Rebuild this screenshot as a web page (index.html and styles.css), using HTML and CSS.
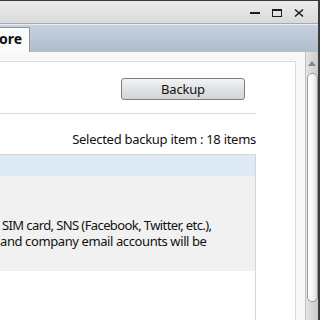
FILE: index.html
```html
<!DOCTYPE html>
<html>
<head>
<meta charset="utf-8">
<link rel="stylesheet" href="styles.css">
</head>
<body>
<div class="window">
  <div class="titlebar">
    <div class="controls">
      <svg class="ctl" width="12" height="10" viewBox="0 0 12 10"><rect x="1" y="4" width="10" height="2" fill="#1e1e1e"/></svg>
      <svg class="ctl" width="12" height="10" viewBox="0 0 12 10"><rect x="1.5" y="1.5" width="9" height="7" fill="none" stroke="#1e1e1e" stroke-width="1"/><rect x="1" y="1" width="10" height="2" fill="#1e1e1e"/></svg>
      <svg class="ctl" width="12" height="10" viewBox="0 0 12 10"><path d="M2 1.5 L10 8.5 M10 1.5 L2 8.5" stroke="#1e1e1e" stroke-width="1.6" fill="none"/></svg>
    </div>
  </div>
  <div class="sep"></div>
  <div class="tabbar">
    <div class="tab">ore</div>
  </div>
  <div class="main">
    <div class="content">
      <div class="panel">
        <div class="inner">
          <div class="btnrow"><button class="btn">Backup</button></div>
          <div class="count">Selected backup item : 18 items</div>
          <div class="list">
            <div class="list-head"></div>
            <div class="list-body">
              <p class="l1">SIM card, SNS (Facebook, Twitter, etc.),</p>
              <p>and company email accounts will be</p>
            </div>
          </div>
        </div>
      </div>
    </div>
    <div class="scrollbar">
      <div class="arrow"></div>
      <div class="thumb"></div>
    </div>
  </div>
</div>
</body>
</html>
```

FILE: styles.css
```css
html, body {
  margin: 0;
  padding: 0;
  width: 320px;
  height: 320px;
  overflow: hidden;
  background: #fff;
  font-family: "Noto Sans", "Open Sans", sans-serif;
  color: #111;
}
.window {
  width: 320px;
  height: 320px;
  box-sizing: border-box;
  border-top: 1px solid #3b3b3b;
  border-right: 2px solid #3b3b3b;
  display: flex;
  flex-direction: column;
}
.titlebar {
  height: 22px;
  flex: none;
  background: linear-gradient(#ececec, #d9d9d9);
  border-bottom: 1px solid #a9a9a9;
  display: flex;
  justify-content: flex-end;
}
.controls {
  display: flex;
  gap: 10px;
  padding-top: 7px;
  padding-right: 13px;
}
.ctl { display: block; }
.sep {
  height: 1px;
  flex: none;
  background: #e8ecf0;
}
.tabbar {
  height: 27px;
  flex: none;
  box-sizing: border-box;
  background: linear-gradient(#c6d2de, #b0bccb);
  display: flex;
  align-items: flex-end;
}
.tab {
  width: 30px;
  height: 25px;
  box-sizing: border-box;
  background: #fbfbfb;
  border-top: 1px solid #8c949e;
  border-right: 1px solid #8c949e;
  font-weight: bold;
  font-size: 14px;
  line-height: 22px;
  text-indent: -1px;
  overflow: hidden;
}
.main {
  flex: 1;
  display: flex;
  min-height: 0;
}
.content {
  flex: 1;
  background: #f8f8f8;
  padding-top: 9px;
  padding-right: 9px;
  display: flex;
  flex-direction: column;
}
.panel {
  flex: 1;
  background: #fff;
  border-top: 1px solid #dcdcdc;
  border-right: 1px solid #dcdcdc;
  padding-right: 39px;
}
.inner {
  width: 256px;
  height: 100%;
  display: flex;
  flex-direction: column;
}
.btnrow {
  display: flex;
  justify-content: flex-end;
  padding-top: 16px;
  padding-right: 11px;
  padding-bottom: 13px;
  border-bottom: 1px solid #d8d8d8;
}
.btn {
  width: 124px;
  height: 22px;
  margin: 0;
  padding: 0;
  border: 1px solid #7d7d7d;
  border-radius: 3px;
  background: linear-gradient(#f4f4f4, #dfe1e3 50%, #d2d5d8);
  font-family: "Noto Sans", "Open Sans", sans-serif;
  font-size: 13px;
  letter-spacing: -0.2px;
  color: #111;
  line-height: 20px;
}
.count {
  text-align: right;
  font-size: 13px;
  letter-spacing: -0.28px;
  line-height: 16px;
  margin-top: 17px;
  margin-bottom: 7px;
}
.list {
  flex: 1;
  border-top: 1px solid #d6d6d6;
  border-right: 1px solid #d6d6d6;
  background: #fff;
}
.list-head {
  height: 21px;
  background: #deebf7;
}
.list-body {
  background: #f1f1f1;
  height: 95px;
  box-sizing: border-box;
  padding-top: 41px;
  font-size: 13px;
  letter-spacing: -0.4px;
  line-height: 16px;
}
.list-body p {
  margin: 0;
  white-space: nowrap;
}
.l1 {
  padding-left: 2px;
  letter-spacing: -0.6px;
}
.scrollbar {
  width: 13px;
  flex: none;
  box-sizing: border-box;
  border-left: 1px solid #c4c4c4;
  background: linear-gradient(to right, #e4e4e4, #cacaca);
  display: flex;
  flex-direction: column;
  align-items: center;
}
.arrow {
  margin-top: 9px;
  width: 0;
  height: 0;
  border-left: 4px solid transparent;
  border-right: 4px solid transparent;
  border-bottom: 5px solid #7c8896;
}
.thumb {
  margin-top: 7px;
  width: 11px;
  height: 229px;
  box-sizing: border-box;
  border: 1px solid #9c9c9c;
  border-radius: 5px;
  background: linear-gradient(to right, #ffffff, #f4f4f4 60%, #d8d8d8);
}
```
